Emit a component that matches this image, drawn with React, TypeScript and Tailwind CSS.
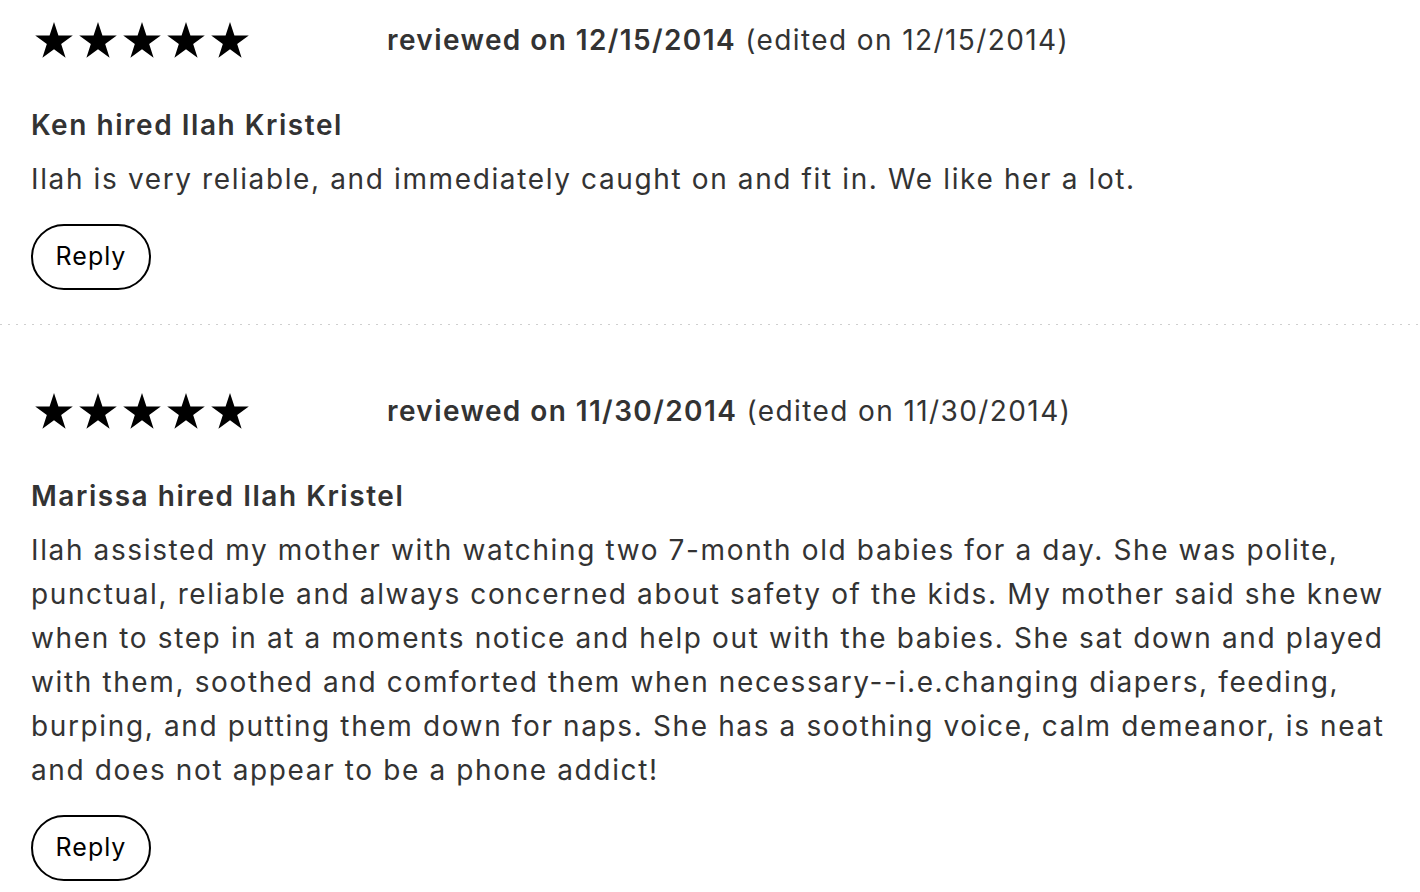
import React from 'react';

type Review = {
  reviewed: string;
  edited: string;
  author: string;
  lines: string[];
};

const reviews: Review[] = [
  {
    reviewed: '12/15/2014',
    edited: '12/15/2014',
    author: 'Ken hired Ilah Kristel',
    lines: ['Ilah is very reliable, and immediately caught on and fit in. We like her a lot.'],
  },
  {
    reviewed: '11/30/2014',
    edited: '11/30/2014',
    author: 'Marissa hired Ilah Kristel',
    lines: [
      'Ilah assisted my mother with watching two 7-month old babies for a day. She was polite,',
      'punctual, reliable and always concerned about safety of the kids. My mother said she knew',
      'when to step in at a moments notice and help out with the babies. She sat down and played',
      'with them, soothed and comforted them when necessary--i.e.changing diapers, feeding,',
      'burping, and putting them down for naps. She has a soothing voice, calm demeanor, is neat',
      'and does not appear to be a phone addict!',
    ],
  },
];

const Star = () => (
  <svg width="38" height="36" viewBox="0 0 24 23" className="shrink-0">
    <path d="M12 0l2.83 8.7H24l-7.42 5.38L19.4 22.8 12 17.4l-7.4 5.4 2.82-8.72L0 8.7h9.17z" fill="#000" />
  </svg>
);

const ReviewItem: React.FC<{ review: Review; first: boolean }> = ({ review, first }) => {
  return (
    <div className={`px-[31px] ${first ? 'pt-[18px]' : 'pt-[64px]'} pb-[34px]`}>
      <div className="flex items-center h-[44px]">
        <div className="flex gap-[6px] w-[356px] pl-[4px]">
          {[0, 1, 2, 3, 4].map((i) => (
            <Star key={i} />
          ))}
        </div>
        <div className="text-[28px] tracking-[0.05em] text-[#333] whitespace-nowrap">
          <span className="font-semibold">reviewed on {review.reviewed}</span>{' '}
          <span>(edited on {review.edited})</span>
        </div>
      </div>
      <div className="mt-[41px] text-[28px] leading-[44px] tracking-[0.055em] font-semibold text-[#333]">
        {review.author}
      </div>
      <p className="mt-[10px] text-[28px] leading-[44px] tracking-[0.058em] text-[#333]">
        {review.lines.map((l, i) => (
          <span key={i} className="block whitespace-nowrap">
            {l}
          </span>
        ))}
      </p>
      <button className="mt-[23px] w-[120px] h-[66px] rounded-full border-2 border-black text-[25px] tracking-[0.04em] text-black bg-white">
        Reply
      </button>
    </div>
  );
};

export default function App() {
  return (
    <div className="w-[1420px] h-[892px] overflow-hidden bg-white font-['Inter',sans-serif]">
      {reviews.map((r, i) => (
        <div key={i}>
          <ReviewItem review={r} first={i === 0} />
          {i === 0 && (
            <div className="h-px bg-[repeating-linear-gradient(to_right,#cfcfcf_0,#cfcfcf_2px,transparent_2px,transparent_8px)]" />
          )}
        </div>
      ))}
    </div>
  );
}
